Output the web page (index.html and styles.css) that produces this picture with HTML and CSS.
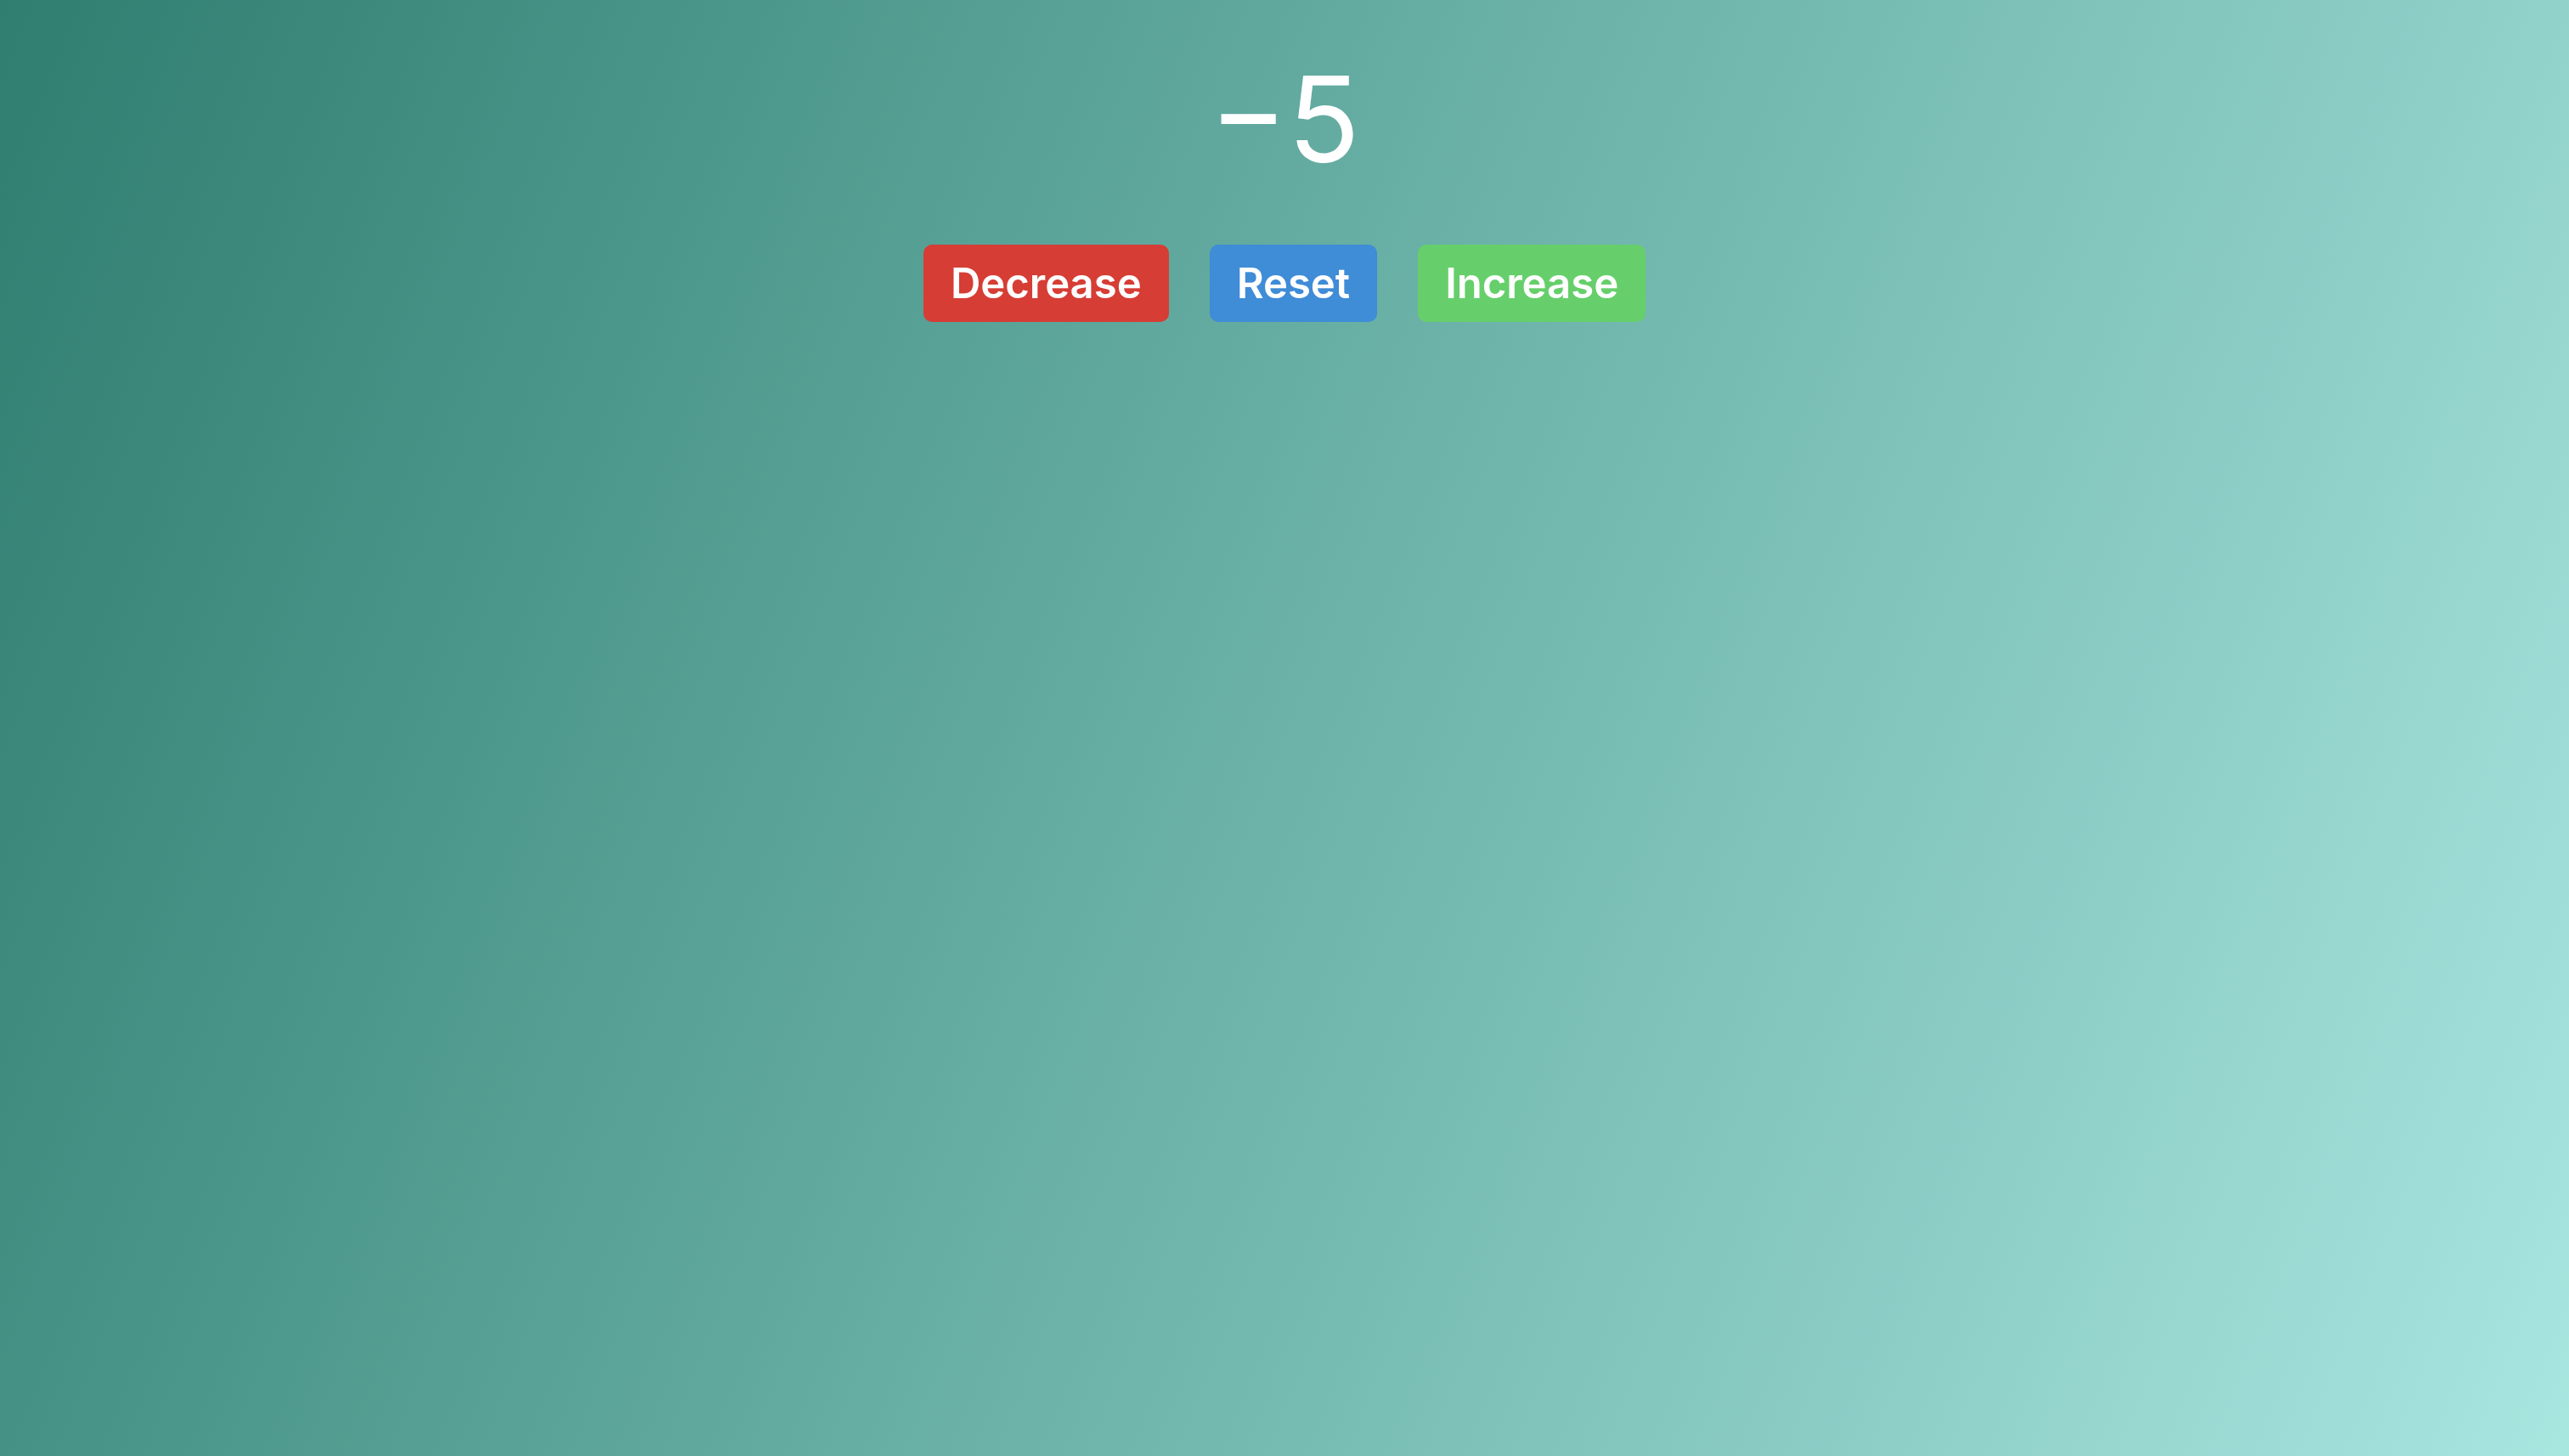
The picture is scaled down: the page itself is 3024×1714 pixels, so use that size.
FILE: index.html
```html
<!DOCTYPE html>
<html lang="en">
<head>
<meta charset="utf-8">
<title>Counter</title>
<link rel="stylesheet" href="styles.css">
</head>
<body>
<main class="app">
  <h1 class="count">−5</h1>
  <div class="controls">
    <button class="btn btn-dec">Decrease</button>
    <button class="btn btn-reset">Reset</button>
    <button class="btn btn-inc">Increase</button>
  </div>
</main>
</body>
</html>
```
FILE: styles.css
```css
html, body {
  margin: 0;
  padding: 0;
}
body {
  min-height: 100vh;
  background: linear-gradient(112deg, #2f7e70 0%, #a8e6e0 100%);
  font-family: Inter, "Open Sans", sans-serif;
  color: #fff;
}
.app {
  display: flex;
  flex-direction: column;
  align-items: center;
  padding-top: 70px;
}
.count {
  margin: 0;
  font-family: Inter, sans-serif;
  font-weight: 400;
  font-size: 140px;
  line-height: 1;
}
.controls {
  display: flex;
  gap: 48px;
  margin-top: 78px;
}
.btn {
  border: none;
  border-radius: 10px;
  padding: 0 32px;
  height: 91px;
  font-family: Inter, sans-serif;
  font-weight: 600;
  font-size: 49px;
  color: #fff;
}
.btn-dec { background: #d63d35; }
.btn-reset { background: #3f8cd7; }
.btn-inc { background: #66cf6b; }
```
